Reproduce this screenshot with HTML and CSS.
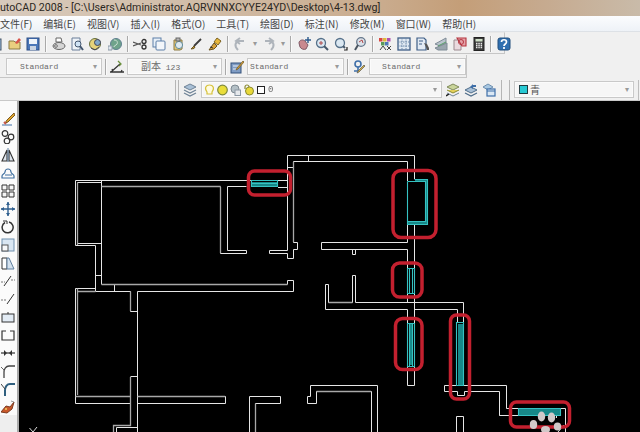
FILE: index.html
```html
<!DOCTYPE html>
<html lang="zh">
<head>
<meta charset="utf-8">
<title>AutoCAD 2008</title>
<link rel="stylesheet" href="styles.css">
</head>
<body>
<div class="app">
  <header class="titlebar">utoCAD 2008 - [C:\Users\Administrator.AQRVNNXCYYE24YD\Desktop\4-13.dwg]</header>
  <nav class="menubar">
    <span>文件(F)</span><span>编辑(E)</span><span>视图(V)</span><span>插入(I)</span><span>格式(O)</span><span>工具(T)</span><span>绘图(D)</span><span>标注(N)</span><span>修改(M)</span><span>窗口(W)</span><span>帮助(H)</span>
  </nav>

  <div class="toolbar std">
    <svg class="ic" viewBox="0 0 14 14"><rect x="2" y="2" width="10" height="11" fill="#9cc0e6" stroke="#456"/></svg>
    <svg class="ic" viewBox="0 0 14 14"><path d="M1 4h5l1 1h5v7H1z" fill="#e9cf7f" stroke="#8a7a45"/><path d="M7 6l4-5 2 2-4 4z" fill="#d9534a"/></svg>
    <svg class="ic" viewBox="0 0 14 14"><rect x="1" y="1" width="12" height="12" fill="#4a76b8" stroke="#2d4f87"/><rect x="3" y="2" width="8" height="5" fill="#eef3fa"/><rect x="4" y="9" width="6" height="4" fill="#c9d3e2"/></svg>
    <i class="sep"></i>
    <svg class="ic" viewBox="0 0 14 14"><path d="M4 1h5l1 4H4z" fill="#fff" stroke="#666"/><ellipse cx="7" cy="9" rx="6" ry="3.5" fill="#d5d5d5" stroke="#666"/><circle cx="4" cy="9" r="1.4" fill="none" stroke="#777"/></svg>
    <svg class="ic" viewBox="0 0 14 14"><path d="M2 1h8v12H2z" fill="#eef3f8" stroke="#6a7f99"/><circle cx="8" cy="7" r="3" fill="#cfe3f5" stroke="#44576f"/><path d="M10 9l3 4" stroke="#44576f" stroke-width="2"/></svg>
    <svg class="ic" viewBox="0 0 14 14"><circle cx="6" cy="7" r="5.5" fill="#e5d27a" stroke="#67703d"/><circle cx="8.5" cy="5.5" r="3" fill="#7fa7c9" stroke="#445"/><path d="M2 11l4 2 4-3" stroke="#445" fill="none"/></svg>
    <svg class="ic" viewBox="0 0 14 14"><circle cx="8" cy="7" r="5.5" fill="#6fa38b" stroke="#5f7f90"/><path d="M6 3c3 0 4 2 3 4s-3 1-3 3" stroke="#cfe2d6" fill="none"/><path d="M0 9h4v4H0z" fill="#dfe6ee" stroke="#8b99a8"/></svg>
    <i class="sep"></i>
    <svg class="ic" viewBox="0 0 14 14"><path d="M0 5l8 3M0 9l8-3" stroke="#555" stroke-width="1.3"/><circle cx="11" cy="4.5" r="2" fill="none" stroke="#333" stroke-width="1.3"/><circle cx="11" cy="10" r="2" fill="none" stroke="#333" stroke-width="1.3"/></svg>
    <svg class="ic" viewBox="0 0 14 14"><rect x="1" y="1" width="8" height="9" fill="#e8f0f8" stroke="#5d7fa8"/><rect x="4" y="4" width="9" height="9" rx="1" fill="#f3f6fa" stroke="#5d7fa8"/></svg>
    <svg class="ic" viewBox="0 0 14 14"><path d="M3 3h8v9l-2 1H3z" fill="#e6c976" stroke="#8b7a45"/><circle cx="8" cy="8" r="3.6" fill="#dfeaf0" stroke="#5f8b9c"/><rect x="5" y="1" width="4" height="3" fill="#b5b5b5" stroke="#666"/></svg>
    <svg class="ic" viewBox="0 0 14 14"><path d="M12 2L5 9" stroke="#3d3d3d" stroke-width="1.8"/><path d="M5 9l-3 3 3-.5 1-1.500z" fill="#c79a3d" stroke="#6a5520"/></svg>
    <svg class="ic" viewBox="0 0 14 14"><path d="M9 1l4 3-3 4-4-3z" fill="#e7b73c" stroke="#7c6220"/><path d="M6 6l3 3-3 3-5 1z" fill="#d9a23a" stroke="#6c5420"/><path d="M2 10l3 1" stroke="#333"/></svg>
    <i class="sep"></i>
    <svg class="ic" viewBox="0 0 14 14"><path d="M5 13C1 9 2 5 6 4h5M7 1L3 4l4 3" fill="none" stroke="#aeb4bb" stroke-width="2"/></svg>
    <span class="drop">▾</span>
    <svg class="ic" viewBox="0 0 14 14"><path d="M9 13c4-4 3-8-1-9H3M7 1l4 3-4 3" fill="none" stroke="#aeb4bb" stroke-width="2"/></svg>
    <span class="drop">▾</span>
    <i class="sep"></i>
    <svg class="ic" viewBox="0 0 14 14"><path d="M2 6c0-3 4-4 6-2l3 4-2 4c-2 1-5 0-6-2z" fill="#c9898f" stroke="#7f5a66"/><path d="M11 0v6M8 3h6" stroke="#2d5a8c" stroke-width="1.4"/></svg>
    <svg class="ic" viewBox="0 0 14 14"><circle cx="6" cy="6" r="4.5" fill="#dbe8f2" stroke="#56718a" stroke-width="1.3"/><path d="M9 9l4 4" stroke="#46586b" stroke-width="2"/><path d="M4 6h4M6 4v4" stroke="#b04a4a"/></svg>
    <svg class="ic" viewBox="0 0 14 14"><circle cx="6" cy="6" r="4.5" fill="#dbe8f2" stroke="#56718a" stroke-width="1.3"/><path d="M9 9l2 2" stroke="#46586b" stroke-width="2"/><path d="M10 13h3v-3" fill="none" stroke="#222" stroke-width="1.2"/></svg>
    <svg class="ic" viewBox="0 0 14 14"><circle cx="8" cy="5" r="4.3" fill="#dbe2ea" stroke="#66788c" stroke-width="1.3"/><path d="M5 8l-3 5" stroke="#4a5560" stroke-width="2"/><path d="M6 5l3-2 1 3" fill="none" stroke="#b04a4a"/></svg>
    <i class="sep"></i>
    <svg class="ic" viewBox="0 0 14 14"><rect x="1" y="1" width="3.5" height="3.5" fill="#d9463f"/><rect x="5" y="1" width="3.5" height="3.5" fill="#e0b93c"/><rect x="9" y="1" width="3.5" height="3.5" fill="#b04fb0"/><rect x="3" y="5" width="3.5" height="3.5" fill="#5b9a5b"/><rect x="7" y="5" width="3.5" height="3.5" fill="#4f78b8"/><path d="M2 13l3-4 3 4M9 13l4-4M9 9l4 4" fill="none" stroke="#444"/></svg>
    <svg class="ic" viewBox="0 0 14 14"><rect x="1" y="1" width="12" height="12" fill="#dfe8f2" stroke="#3f5f87" stroke-width="1.3"/><path d="M5 1v12M9 1v12M1 5h12M1 9h12" stroke="#6f8bab" stroke-dasharray="1.5 1"/></svg>
    <svg class="ic" viewBox="0 0 14 14"><path d="M1 1h7l2 2v10H1z" fill="#e3ebf4" stroke="#3f5f87" stroke-width="1.2"/><path d="M3 4h4M3 7h3" stroke="#3f5f87"/><path d="M8 6l3 1 2 4v2h-2l-1-3z" fill="#555"/></svg>
    <svg class="ic" viewBox="0 0 14 14"><path d="M1 7l11-6v5L6 9z" fill="#b9c4cd" stroke="#7f8b96"/><path d="M1 11l12-5v7H4z" fill="#9aa6ae" stroke="#7f8b96"/><path d="M4 9l8-4" stroke="#5aa06a"/></svg>
    <svg class="ic" viewBox="0 0 14 14"><path d="M1 3h7v10H1z" fill="#eadadf" stroke="#9c8a90"/><path d="M4 1h9v8H9z" fill="#e4a2a8" stroke="#b5343f" stroke-width="1.1"/><circle cx="8" cy="5" r="2.5" fill="none" stroke="#b5343f"/></svg>
    <svg class="ic" viewBox="0 0 14 14"><rect x="2" y="0.5" width="10" height="13" fill="#3c3c3c" stroke="#222"/><rect x="3.5" y="2" width="7" height="2.5" fill="#cfe0c8"/><path d="M4 6.500h1.500M6.300 6.500h1.500M8.600 6.500h1.500M4 8.500h1.500M6.300 8.500h1.500M8.600 8.500h1.500M4 10.500h1.500M6.300 10.500h1.500M8.600 10.500h1.500" stroke="#e8e8e8" stroke-width="1.300"/></svg>
    <i class="sep"></i>
    <svg class="ic" viewBox="0 0 14 14"><rect x="1" y="1" width="12" height="12" rx="2" fill="#2f6fb0" stroke="#234f7d"/><path d="M4.500 5c0-3 5-3 5 0 0 2-2.500 2-2.500 4M7 10v2" fill="none" stroke="#fff" stroke-width="1.700"/></svg>
  </div>

  <div class="row-two">
    <div class="combo c1"><b class="mono">Standard</b><span class="drop">▾</span></div>
    <i class="sep"></i>
    <svg class="ic" viewBox="0 0 14 14"><path d="M0 12h14M1 12L10 4M3 11l-1-2M11 12l1-2" stroke="#333" stroke-width="1.300" fill="none"/><path d="M8 1l3 3-2 2" stroke="#6a8f3c" fill="none" stroke-width="1.300"/></svg>
    <div class="combo c2"><b class="mono"><span class="cjk">副本</span> 123</b><span class="drop">▾</span></div>
    <i class="sep"></i>
    <svg class="ic" viewBox="0 0 14 14"><rect x="1" y="3" width="10" height="10" fill="#7f9cc4" stroke="#33507a"/><path d="M3 6h6M3 9h4" stroke="#e8eef6"/><path d="M13 1L7 8l-1 2 2-1 6-7z" fill="#d9a23a" stroke="#6c5420" stroke-width=".7"/></svg>
    <div class="combo c3"><b class="mono">Standard</b><span class="drop">▾</span></div>
    <i class="sep"></i>
    <svg class="ic" viewBox="0 0 14 14"><circle cx="6" cy="4" r="3" fill="none" stroke="#3f6fa8" stroke-width="1.600"/><path d="M6 7v4H2" fill="none" stroke="#3f6fa8" stroke-width="1.600"/><path d="M13 6L7 12l-2 1 1-2 6-6z" fill="#d9b23a" stroke="#555" stroke-width=".7"/></svg>
    <div class="combo c4"><b class="mono">Standard</b><span class="drop">▾</span></div>
  </div>

  <div class="row-three">
    <i class="grip"></i>
    <svg class="ic" viewBox="0 0 14 14"><path d="M7 1l6 3-6 3-6-3z" fill="#a9c0d6" stroke="#6f8397"/><path d="M1 7l6 3 6-3M1 10l6 3 6-3" fill="none" stroke="#6f8397" stroke-width="1.200"/></svg>
    <div class="combo layer">
      <svg class="state" viewBox="0 0 11 12"><path d="M3 8C0 4 2 1 5.500 1S11 4 8 8v2H3z" fill="#fffbe0" stroke="#d6c23c" stroke-width="1.200"/></svg>
      <svg class="state" viewBox="0 0 11 12"><circle cx="5.500" cy="6" r="4.800" fill="#e9dd3a" stroke="#7f8a3c" stroke-width="1.200"/></svg>
      <svg class="state" viewBox="0 0 11 12"><circle cx="5" cy="5" r="4" fill="#b4c0c6" stroke="#7f8a92"/><rect x="5" y="6" width="5.500" height="5.500" fill="#e6e9ec" stroke="#8b98a4"/></svg>
      <svg class="state" viewBox="0 0 11 12"><path d="M2 5V3a2 2 0 0 1 4 0" fill="none" stroke="#8a8a30" stroke-width="1.200"/><circle cx="6.500" cy="7" r="4" fill="#e9d93a" stroke="#8a8a30"/></svg>
      <i class="white-swatch"></i>
      <b class="mono zero">0</b>
      <span class="drop push">▾</span>
    </div>
    <svg class="ic" viewBox="0 0 14 14"><path d="M7 1l6 3-6 3-6-3z" fill="#c9d49a" stroke="#7f8a5a"/><path d="M1 7l6 3 6-3" fill="#e3cf5a" stroke="#8a8a30"/><path d="M1 10l6 3 6-3" fill="none" stroke="#6f8397"/><path d="M0 13l3-2" stroke="#222" stroke-width="1.500"/></svg>
    <svg class="ic" viewBox="0 0 14 14"><path d="M7 4l6 3-6 3-6-3z" fill="#a9c0d6" stroke="#4f6d8a"/><path d="M1 10l6 3 6-3" fill="none" stroke="#4f6d8a" stroke-width="1.200"/><path d="M9 1L6 4l3 2V4h3V2H9z" fill="#3f6fa8"/></svg>
    <svg class="ic" viewBox="0 0 14 14"><path d="M1 4l5-3 5 3-5 3z" fill="#a9c8e2" stroke="#6f8fae"/><rect x="5" y="6" width="8" height="7" fill="#dbe8f4" stroke="#3f6fa8" stroke-width="1.200"/><path d="M5 8h8" stroke="#3f6fa8"/></svg>
    <i class="grip second"></i>
    <div class="combo color"><i class="cyan-swatch"></i><span class="qing">青</span><span class="drop push">▾</span></div>
    <i class="edge"></i>
  </div>

  <main class="work">
    <aside class="sidebar">
      <svg class="ic" viewBox="0 0 14 14"><path d="M13 1L6 8l-2 3 3-1 7-7z" fill="#e0a62f" stroke="#7c5a20"/><path d="M1 13h10" stroke="#3f6fa8"/><path d="M3 10l2 2" stroke="#c9584a" stroke-width="2"/></svg>
      <svg class="ic" viewBox="0 0 14 14"><circle cx="4" cy="3.500" r="2.800" fill="none" stroke="#333" stroke-width="1.200"/><circle cx="10" cy="7" r="2.800" fill="none" stroke="#333" stroke-width="1.200"/><circle cx="6" cy="11" r="2.800" fill="none" stroke="#333" stroke-width="1.200"/></svg>
      <svg class="ic" viewBox="0 0 14 14"><path d="M6 2L1 13h5zM8 2v11h5z" fill="#dfe6ee" stroke="#333" stroke-width="1.100"/><path d="M7 0v14" stroke="#5f7f9f"/></svg>
      <svg class="ic" viewBox="0 0 14 14"><path d="M1 12h12v-2c0-2-3-2-3-4a3 3 0 0 0-6 0c0 2-3 2-3 4z" fill="none" stroke="#3f6f9f" stroke-width="1.200"/><path d="M4 9h7" stroke="#3f6f9f"/></svg>
      <svg class="ic" viewBox="0 0 14 14"><path d="M1 1h5v5H1zM8 1h5v5H8zM1 8h5v5H1zM8 8h5v5H8z" fill="#f6f6f6" stroke="#333"/></svg>
      <svg class="ic" viewBox="0 0 14 14"><path d="M7 0v14M0 7h14" stroke="#2f5f8f" stroke-width="1.400"/><path d="M7 0l2 3H5zM7 14l2-3H5zM0 7l3-2v4zM14 7l-3-2v4z" fill="#2f5f8f"/></svg>
      <svg class="ic" viewBox="0 0 14 14"><path d="M4 2.500a5.500 5.500 0 1 0 4 -.5" fill="none" stroke="#333" stroke-width="1.500"/><path d="M2 1h4v3" fill="none" stroke="#333"/></svg>
      <svg class="ic" viewBox="0 0 14 14"><rect x="1" y="1" width="12" height="12" fill="#d9e6f2" stroke="#6f8fae"/><rect x="1" y="7" width="6" height="6" fill="#f6f8fa" stroke="#555"/></svg>
      <svg class="ic" viewBox="0 0 14 14"><path d="M1 2h5v11H1z" fill="#fff" stroke="#333"/><path d="M6 2h2l5 11H6z" fill="#d4e2ef" stroke="#5f7f9f"/></svg>
      <svg class="ic" viewBox="0 0 14 14"><path d="M0 8h4M10 6h4" stroke="#777" stroke-dasharray="2 1"/><path d="M3 12l7-10" stroke="#333"/></svg>
      <svg class="ic" viewBox="0 0 14 14"><path d="M0 8h6" stroke="#777" stroke-dasharray="2 1"/><path d="M6 12l7-10" stroke="#333"/></svg>
      <svg class="ic" viewBox="0 0 14 14"><rect x="1" y="4" width="12" height="8" fill="#e3ecf5" stroke="#333"/><path d="M7 2v2" stroke="#333"/></svg>
      <svg class="ic" viewBox="0 0 14 14"><path d="M5 3H1v9h12V3H9" fill="none" stroke="#333" stroke-width="1.200"/></svg>
      <svg class="ic" viewBox="0 0 14 14"><path d="M0 7h14" stroke="#333" stroke-width="1.200"/><path d="M3 4l3 3-3 3zM11 4L8 7l3 3z" fill="#333"/></svg>
      <svg class="ic" viewBox="0 0 14 14"><path d="M14 2H8C5 2 3 5 3 8v6" fill="none" stroke="#444" stroke-width="1.300"/><path d="M0 3l4 4" stroke="#666"/></svg>
      <svg class="ic" viewBox="0 0 14 14"><path d="M14 2H9C6 2 4 5 4 8v6" fill="none" stroke="#2f5f7f" stroke-width="2"/><path d="M0 2l4 5" stroke="#444"/></svg>
      <svg class="ic" viewBox="0 0 14 14"><path d="M0 12l5-6 4 1 4-5-2 7-5 4z" fill="#c9582a" stroke="#7a3a20"/><circle cx="5" cy="9" r="1" fill="#f0d060"/><path d="M10 1l3 1" stroke="#999"/></svg>
    </aside>
    <svg class="drawing" viewBox="19 101 621 331">
      <g class="wall">
        <path d="M75.500 180.500H287.500M77.500 182.500H101.500V243.500H77.500ZM75.500 180.500V245.500H95.500V291.500H130.500V311.500H137.500M101.500 180.500V284.500M95.500 275.500H101.500"/>
        <path d="M114.500 284.500V291.500M137.500 291.500H293.500V280.500H287.500V284.500M137.500 291.500V432"/>
        <path d="M75.500 288.500H95.500M75.500 288.500V403.500H130.500M137.500 403.500H225.500V396.500H137.500M130.500 396.500H75.500M130.500 376.500H137.500"/>
        <path d="M137.500 403.500V427.500H116.500V432"/>
        <path d="M249.500 432V396.500H280.500V403.500H255.500V432"/>
        <path d="M310.500 385.500H377.500V432M310.500 385.500V396.500H307.500V403.500H316.500V391.500H371.500V432"/>
        <path d="M325.500 284.500H328.500V302.500H352.500V275.500H355.500V302.500H463.500V322M325.500 284.500V309.500H407.500M414.500 309.500H457.500V322"/>
        <path d="M287.500 155.500H414.500V179M293.500 161.500H407.500V181M287.500 155.500V250.500H269.500V253.500H287.500V258.500H293.500V249.500H297.500V242.500H293.500V161.500M287.500 167.500H293.500M308.500 155.500V161.500"/>
        <path d="M414.500 224V268M407.500 222V242.500H321.500V249.500H407.500V268M352.500 249.500V254.500H355.500V249.500M414.500 294V323M407.500 294V302.500M407.500 309.500V323M407.500 366V385.500H414.500V366"/>
        <path d="M246.500 186.500H227.500V250.500H246.500V253.500H220.500V186.500M287.500 187.500H278M246.500 180.500H251"/>
        <path d="M456.500 385.500H444.500V391.500H457.500V395.500H464.500V391.500H499.500V415.500H516M464 385.500H506.500V408.500H518M456.500 432V416.500H463.500V432M560 408.500H565.500V432M499.500 415.500H556.500V418M558 432L564 425"/>
      </g>
      <g class="wall dim">
        <path d="M77.500 288.500V395M101.500 186.500H220.500M101.500 284.500H287.500M77.500 182.500V245M77.500 291.500H95.500M130.500 291.500V311M130.500 377V425.500H113.500V432M137.500 396.500H225M75.500 396.500H130.500M255.500 403.500V432M316.500 391.500H371M328.500 302.500H352.500M220.500 187V253M293.500 162V242"/>
      </g>
      <path class="teal-fill" d="M458 324h5v61h-5zM410 324h2v41h-2zM519 409h41v6h-41zM252 182h25v4h-25zM415 180h12v1.500h-12zM426 180h1.500v44h-1.500zM408 222h19v2h-19z"/>
      <g class="teal">
        <path d="M251.500 180.500H277.500V186.500H251.500ZM251.500 183.500H277.500"/>
        <path d="M414.500 179.500H427.500V224.500H407.500V181.500M407.500 181.500H425.500V221.500H408"/>
        <path d="M407.500 268.500H414.500V293.500H407.500ZM409.500 268.500V293.500M412.500 268.500V293.500"/>
        <path d="M407.500 323.500H414.500V366.500H407.500ZM409.500 323.500V366.500M412.500 323.500V366.500"/>
        <path d="M456.500 322.500H463.500V385.500H456.500Z"/>
        <path d="M518.500 408.500H560.500V415.500H518.500Z"/>
      </g>
      <g class="mark">
        <rect x="248.500" y="171" width="42" height="24" rx="6"/>
        <rect x="393" y="170.500" width="43" height="67" rx="8"/>
        <rect x="392.500" y="263" width="29.500" height="34" rx="7"/>
        <rect x="395.500" y="318.500" width="26.500" height="51" rx="7"/>
        <rect x="450.500" y="315" width="19" height="84" rx="6"/>
        <rect x="510.500" y="402" width="59" height="25" rx="6"/>
      </g>
      <g class="paw">
        <ellipse cx="541.500" cy="416.500" rx="3.700" ry="5"/>
        <ellipse cx="551.500" cy="417.500" rx="3.700" ry="5"/>
        <ellipse cx="533.500" cy="424.500" rx="3.700" ry="4.500"/>
        <ellipse cx="557.500" cy="426.500" rx="3.700" ry="4"/>
        <ellipse cx="545.500" cy="429.500" rx="4.500" ry="3.500"/>
      </g>
      <path class="ucs" d="M29.500 428L33 432M37 427L33 432"/>
    </svg>
  </main>
</div>
</body>
</html>
```
FILE: styles.css
```css
* { box-sizing: border-box; }
html, body { margin: 0; padding: 0; width: 640px; height: 432px; overflow: hidden; background: #f0f0f0; }
.app { width: 640px; height: 432px; display: flex; flex-direction: column; overflow: hidden; filter: blur(0.45px); font-family: "Liberation Sans", "Noto Sans CJK SC", sans-serif; }

.titlebar {
  height: 16px; flex: none; font: 10.650px/15px Roboto, "Noto Sans", sans-serif; color: #2b2722; white-space: nowrap; overflow: hidden;
  background: linear-gradient(90deg, #d8cabc 0%, #d1bda8 30%, #c9ab8d 60%, #c49e78 72%, #c6aa8f 85%, #c9bba9 100%);
}
.menubar {
  height: 16px; flex: none; display: flex; gap: 11px; align-items: center; font: 10px/15px "Noto Sans CJK SC", sans-serif; color: #444; white-space: nowrap;
  background: linear-gradient(#fbfcfe, #eef2f7); border-bottom: 1px solid #dde1e6;
}

.ic { width: 14px; height: 14px; flex: none; display: block; }
.sep { width: 1px; height: 16px; flex: none; background: #a9a9a9; border-right: 1px solid #fafafa; box-sizing: content-box; }
.drop { width: 5px; flex: none; font-size: 8px; line-height: 10px; color: #999; text-align: center; }
.mono { font: 400 8px/12px "Liberation Mono", monospace; color: #6a6a6a; white-space: nowrap; }
.cjk { font: 10px/12px "Noto Sans CJK SC", sans-serif; }

.toolbar.std {
  width: 516px; height: 22px; margin-left: -11px; flex: none; display: flex; align-items: center; gap: 4.700px; padding-top: 1px;
  background: #f0f0f0; border: 1px solid #c6c6c6; border-top-color: #e8e8e8; border-left: 0;
}

.row-two {
  width: 467px; height: 23px; flex: none; margin-top: 1px; padding: 1px 0 0 6px; display: flex; align-items: center; gap: 3px;
  background: #f0f0f0; border-right: 1px solid #c6c6c6; border-bottom: 1px solid #c6c6c6;
}
.combo {
  height: 17px; flex: none; display: flex; align-items: center; background: #f6f6f6; border: 1px solid #c9c9c9; box-shadow: inset 0 0 0 1px #fbfbfb;
}
.combo .drop { margin-left: auto; margin-right: 4px; }
.c1 { width: 96px; padding-left: 13px; }
.c2 { width: 95px; padding-left: 13px; }
.c3 { width: 97px; padding-left: 2px; }
.c4 { width: 97px; padding-left: 12px; }

.row-three {
  height: 23px; flex: none; padding: 1px 0 0 175px; display: flex; align-items: center; gap: 4px; background: #f0f0f0; border-bottom: 1px solid #c9c9c9;
}
.grip { width: 4px; height: 20px; flex: none; border-left: 1px solid #b5b5b5; border-right: 1px solid #b5b5b5; }
.grip.second { width: 9px; margin-left: 1px; }
.layer { width: 241px; padding-left: 2px; gap: 2px; }
.state { width: 11px; height: 12px; flex: none; display: block; }
.white-swatch { width: 8px; height: 8px; flex: none; background: #fff; border: 1px solid #222; margin-left: 1px; }
.zero { margin-left: 1px; font-size: 9px; }
.drop.push { margin-left: auto; }
.color { width: 120px; padding-left: 4px; gap: 2px; }
.cyan-swatch { width: 9px; height: 9px; flex: none; background: #27c9d3; border: 1px solid #1d3a40; }
.qing { font: 10px/12px "Noto Sans CJK SC", sans-serif; color: #555; }
.edge { width: 1px; height: 20px; flex: none; background: #bdbdbd; }

.work { flex: 1; min-height: 0; display: flex; }
.sidebar {
  width: 19px; flex: none; display: flex; flex-direction: column; gap: 4px; padding: 11px 2px 0 1px; background: linear-gradient(#fbfbfb, #fbfbfb 314px, #eeeeee 314px); border-right: 2px solid #a9a9a9;
}
.drawing { width: 621px; height: 331px; flex: none; display: block; background: #000; }
.wall path { fill: none; stroke: #e6e6e6; stroke-width: 1; }
.wall.dim path { stroke: #a8a8a8; stroke-width: 1.300; }
.teal path { fill: none; stroke: #36c2c2; stroke-width: 1.100; }
.teal-fill { fill: #178888; stroke: none; }
.mark rect { fill: none; stroke: #c3202f; stroke-width: 3.500; }
.paw ellipse { fill: #d0c8c8; }
.ucs { fill: none; stroke: #ddd; stroke-width: 1; }
```
